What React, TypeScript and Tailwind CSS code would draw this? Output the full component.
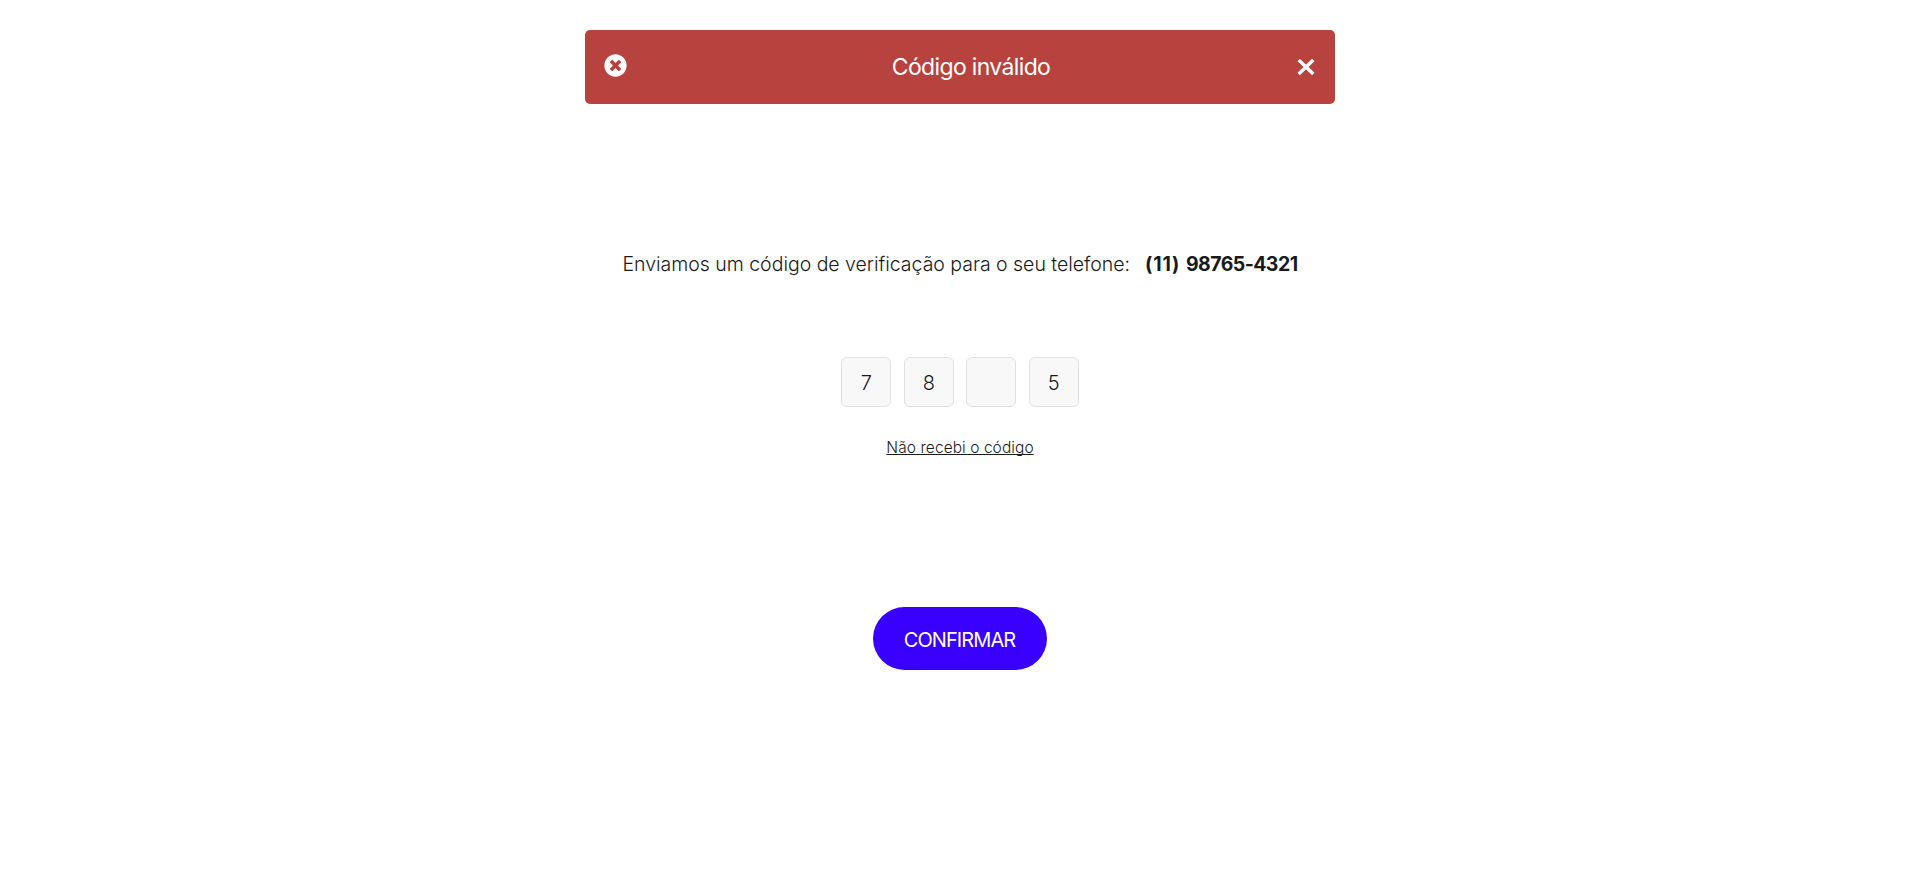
import { FaTimesCircle } from "react-icons/fa";

const digits = ["7", "8", "", "5"];

function Alert() {
  return (
    <div className="flex h-[74px] w-[750px] items-center rounded-[5px] bg-[#b8423e] px-5 text-white">
      <FaTimesCircle className="-ml-px mb-[3px] size-[23px] shrink-0" />
      <p className="grow pl-[18px] text-center text-[23px] leading-[30px] font-normal tracking-[-0.65px]">
        Código inválido
      </p>
      <button aria-label="Fechar" className="-mt-px">
        <svg className="block h-4 w-[18px]" viewBox="0 0 18 16" fill="none" stroke="currentColor" strokeWidth="3.4">
          <path d="M1.7 1L16.3 15M16.3 1L1.7 15" />
        </svg>
      </button>
    </div>
  );
}

export default function App() {
  return (
    <main className="flex h-[875px] flex-col items-center bg-white pt-[30px] font-['Inter',sans-serif] text-[#1a1a1a]">
      <Alert />
      <p className="mt-[145px] flex h-[30px] w-[675px] items-center justify-between whitespace-nowrap text-[19.5px] leading-[30px] font-light">
        <span className="tracking-[-0.02px]">Enviamos um código de verificação para o seu telefone:</span>
        <strong className="font-bold">
          <span className="tracking-[0.9px]">(11) </span>
          <span className="tracking-[-0.55px]">98765-4321</span>
        </strong>
      </p>
      <div className="mt-[78px] flex gap-[12.5px]">
        {digits.map((digit, i) => (
          <input
            key={i}
            readOnly
            aria-label={`Dígito ${i + 1}`}
            value={digit}
            className="size-[50px] rounded-[6px] border border-[#dee2e6] bg-[#f8f8f8] pt-0.5 text-center text-[20px] font-light"
          />
        ))}
      </div>
      <a className="mt-[29px] text-[15.5px] leading-6 font-light tracking-[0.07px] whitespace-nowrap underline [text-decoration-skip-ink:none]">
        Não recebi o código
      </a>
      <button className="mt-[147px] h-[63px] w-[174px] rounded-full bg-[#3a00ff] pt-0.5 pr-px text-[20px] tracking-[-0.9px] text-white">
        CONFIRMAR
      </button>
    </main>
  );
}
